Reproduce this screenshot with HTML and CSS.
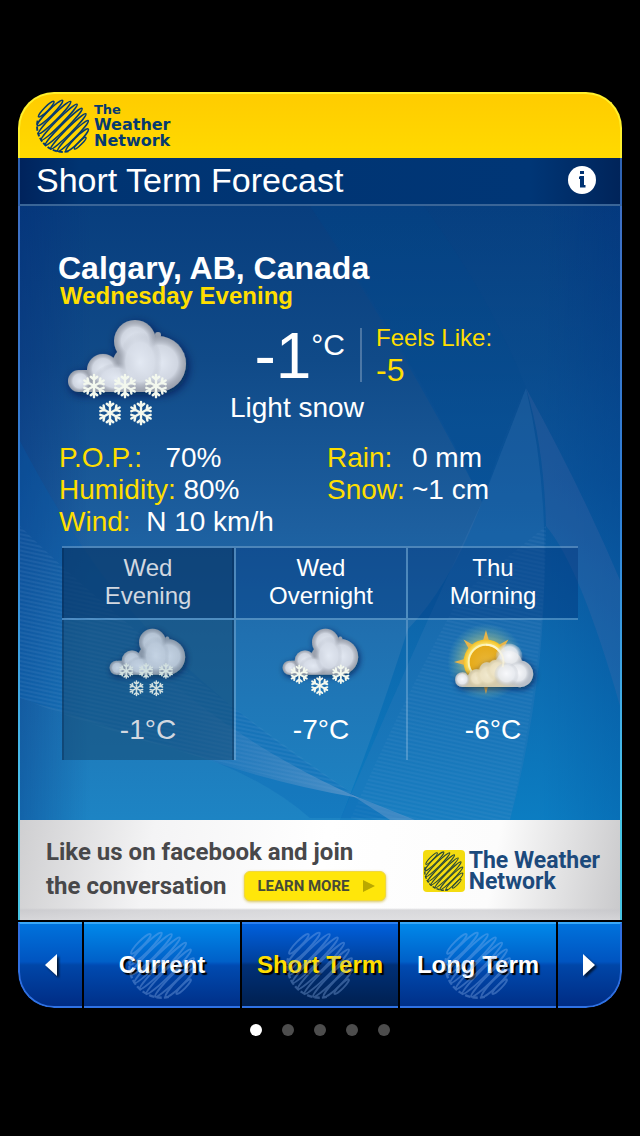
FILE: index.html
```html
<!DOCTYPE html>
<html lang="en">
  <head>
    <meta charset="utf-8">
    <meta name="viewport" content="width=device-width, initial-scale=1">
    <title>Short Term Forecast</title>
    <link rel="stylesheet" href="styles.css">
  </head>
  <body>
    <!-- Shared drawings -->
    <svg class="defs" width="0" height="0" aria-hidden="true">
      <defs>
        <radialGradient id="puff" cx="50%" cy="50%" r="50%">
          <stop offset="0" stop-color="#e3e9f3" />
          <stop offset="0.65" stop-color="#d6dce7" stop-opacity="0.9" />
          <stop offset="1" stop-color="#b0b6c2" stop-opacity="0" />
        </radialGradient>
        <radialGradient id="white-puff" cx="50%" cy="45%" r="55%">
          <stop offset="0" stop-color="#f8f9fc" />
          <stop offset="0.6" stop-color="#e8ebf0" stop-opacity="0.9" />
          <stop offset="1" stop-color="#b4bac4" stop-opacity="0" />
        </radialGradient>
        <radialGradient id="cream-puff" cx="50%" cy="50%" r="50%">
          <stop offset="0" stop-color="#f2ead0" />
          <stop offset="0.6" stop-color="#ece2c4" stop-opacity="0.9" />
          <stop offset="1" stop-color="#d8cba0" stop-opacity="0" />
        </radialGradient>
        <linearGradient id="sun-cloud" x1="0" y1="0" x2="1" y2="0">
          <stop offset="0" stop-color="#b4bac4" />
          <stop offset="0.2" stop-color="#cfc6a8" />
          <stop offset="0.6" stop-color="#d6ccae" />
          <stop offset="0.85" stop-color="#b9bfc9" />
        </linearGradient>
        <radialGradient id="sun-disk" cx="50%" cy="50%" r="50%">
          <stop offset="0" stop-color="#e8b638" />
          <stop offset="0.7" stop-color="#e6ab1a" />
          <stop offset="0.8" stop-color="#fbe266" />
          <stop offset="1" stop-color="#f2bd22" />
        </radialGradient>
        <radialGradient id="sun-glow" cx="50%" cy="50%" r="50%">
          <stop offset="0.4" stop-color="#f5e05a" stop-opacity="0.7" />
          <stop offset="1" stop-color="#8fd0b0" stop-opacity="0" />
        </radialGradient>
        <filter id="cloud-shadow" x="-20%" y="-20%" width="140%" height="150%">
          <feDropShadow dx="2" dy="3" stdDeviation="5" flood-color="#00163c" flood-opacity="0.7" />
        </filter>
        <symbol id="globe" viewBox="0 0 100 100">
          <g transform="rotate(-45 50 50)" fill="none" stroke="currentColor" stroke-width="2.800">
            <ellipse cx="50" cy="6" rx="20" ry="4" />
            <ellipse cx="50" cy="16" rx="33" ry="5" />
            <ellipse cx="50" cy="28" rx="42" ry="5" />
            <ellipse cx="50" cy="40" rx="47" ry="5" />
            <ellipse cx="50" cy="52" rx="48" ry="5" />
            <ellipse cx="50" cy="64" rx="46" ry="5" />
            <ellipse cx="50" cy="76" rx="40" ry="5" />
            <ellipse cx="50" cy="87" rx="29" ry="5" />
            <ellipse cx="50" cy="95" rx="15" ry="3" />
          </g>
          <path d="M3 40A48 48 0 0 0 60 97" fill="none" stroke="currentColor" stroke-width="3.500" stroke-dasharray="8 3" />
        </symbol>
        <symbol id="flake" viewBox="-14 -14 28 28" overflow="visible">
          <g stroke="#f3f8ee" stroke-width="2.600" stroke-linecap="round">
            <g id="flake-arm">
              <path d="M0 -12V12M-3.5 -10L0 -7L3.5 -10M-3.5 10L0 7L3.5 10" fill="none" />
            </g>
            <use href="#flake-arm" transform="rotate(60)" />
            <use href="#flake-arm" transform="rotate(120)" />
          </g>
        </symbol>
        <symbol id="cloud" viewBox="0 0 128 112" overflow="visible">
          <g filter="url(#cloud-shadow)">
            <g fill="#9ca2ae">
              <rect x="8" y="54" width="92" height="22" rx="10" />
              <circle cx="15" cy="65" r="11" />
              <circle cx="39" cy="54" r="16" />
              <circle cx="94" cy="48" r="28" />
              <circle cx="71" cy="25" r="21" />
              <circle cx="70" cy="50" r="22" />
              <circle cx="94" cy="19" r="3" />
            </g>
          </g>
          <circle cx="16" cy="65" r="11" fill="url(#puff)" />
          <circle cx="39" cy="53" r="16" fill="url(#puff)" />
          <circle cx="96" cy="47" r="27" fill="url(#puff)" />
          <circle cx="71" cy="25" r="21" fill="url(#puff)" />
          <ellipse cx="52" cy="62" rx="22" ry="15" fill="url(#puff)" />
          <ellipse cx="76" cy="46" rx="22" ry="30" fill="url(#puff)" />
        </symbol>
        <symbol id="light-snow" viewBox="0 0 128 112" overflow="visible">
          <use href="#cloud" width="128" height="112" />
          <use href="#flake" x="17" y="57" width="26" height="26" />
          <use href="#flake" x="48" y="57" width="26" height="26" />
          <use href="#flake" x="79" y="57" width="26" height="26" />
          <use href="#flake" x="33" y="84" width="26" height="26" />
          <use href="#flake" x="64" y="84" width="26" height="26" />
        </symbol>
        <symbol id="snow" viewBox="0 0 128 112" overflow="visible">
          <use href="#cloud" width="128" height="112" />
          <use href="#flake" x="14" y="59" width="32" height="32" />
          <use href="#flake" x="79" y="59" width="32" height="32" />
          <use href="#flake" x="46" y="77" width="32" height="32" />
        </symbol>
        <symbol id="part-sun" viewBox="0 0 128 112" overflow="visible">
          <circle cx="53" cy="56" r="60" fill="url(#sun-glow)" />
          <g fill="#e9b548">
            <path d="M48 24L53 6L58 24Z" />
            <path d="M48 88L53 106L58 88Z" />
            <path d="M21 51L3 56L21 61Z" />
            <path d="M27 37L18 21L34 30Z" />
            <path d="M79 37L88 21L72 30Z" />
          </g>
          <circle cx="53" cy="56" r="35" fill="url(#sun-disk)" />
          <circle cx="53" cy="56" r="27" fill="none" stroke="#fbf3b4" stroke-width="3" />
          <g filter="url(#cloud-shadow)">
            <path d="M5 84A11 11 0 0 1 25 77A14 14 0 0 1 43 68A12 12 0 0 1 59 57Q63 52 69 53A21 21 0 0 1 109 54A20 20 0 0 1 103 95H16A11 11 0 0 1 5 84Z" fill="url(#sun-cloud)" />
          </g>
          <circle cx="16" cy="84" r="11" fill="url(#white-puff)" />
          <circle cx="89" cy="48" r="21" fill="url(#white-puff)" />
          <circle cx="103" cy="75" r="19" fill="url(#white-puff)" />
          <circle cx="39" cy="81" r="14" fill="url(#cream-puff)" />
          <circle cx="56" cy="76" r="19" fill="url(#cream-puff)" />
          <circle cx="71" cy="68" r="18" fill="url(#cream-puff)" />
          <circle cx="85" cy="76" r="19" fill="url(#white-puff)" />
          <path d="M53 29A27 27 0 0 1 79 64" fill="none" stroke="#fff8dc" stroke-width="3" opacity="0.6" />
        </symbol>
      </defs>
    </svg>

    <main class="card">
      <header class="brand">
        <svg class="brand-globe"><use href="#globe" /></svg>
        <div class="brand-name"><small>The</small>Weather<br>Network</div>
      </header>

      <div class="titlebar">
        <h1>Short Term Forecast</h1>
        <button class="info" aria-label="Information">
          <svg viewBox="0 0 28 28">
            <circle cx="14" cy="14" r="14" fill="#fff" />
            <path d="M12 5h4v3h-4zM12 10h4v9h1.500v2.500H12V13h-1v-2z" fill="#003272" />
          </svg>
        </button>
      </div>

      <section class="forecast">
        <svg class="waves" viewBox="0 0 600 614" preserveAspectRatio="none" aria-hidden="true">
          <defs>
            <pattern id="mesh" width="4" height="4" patternUnits="userSpaceOnUse" patternTransform="rotate(12)">
              <path d="M0 1H4" stroke="#8fb4e0" stroke-width="1" />
            </pattern>
            <linearGradient id="band" gradientUnits="userSpaceOnUse" x1="0" y1="0" x2="0" y2="614">
              <stop offset="0" stop-color="#004488" stop-opacity="0.2" />
              <stop offset="0.45" stop-color="#00509a" stop-opacity="0.6" />
              <stop offset="1" stop-color="#0078c0" stop-opacity="0.6" />
            </linearGradient>
            <linearGradient id="streak" x1="0" y1="0" x2="1" y2="0">
              <stop offset="0" stop-color="#3a78c0" stop-opacity="0" />
              <stop offset="0.6" stop-color="#6a98c8" stop-opacity="0.5" />
              <stop offset="1" stop-color="#7fa6d0" stop-opacity="0.9" />
            </linearGradient>
          </defs>
          <path d="M290 0Q400 170 462 296Q430 380 388 423Q350 540 320 614H600V0Z" fill="url(#band)" />
          <path d="M404 0Q470 90 506 182Q490 210 462 296Q400 160 290 0Z" fill="#004c90" opacity="0.15" />
          <path d="M506 182Q560 280 600 374V500Q560 360 526 320Q524 240 506 182Z" fill="#6070a8" opacity="0.2" />
          <path d="M506 182Q534 300 520 450Q510 540 490 614H320Q390 450 462 296Z" fill="#4a84c0" opacity="0.2" />
          <path d="M526 320Q526 450 490 614H330Q380 500 440 390Z" fill="url(#mesh)" opacity="0.15" />
          <path d="M0 235Q60 350 123 418Q210 510 339 592L388 612H290Q230 560 130 535Q60 510 0 492Z" fill="#0060b4" opacity="0.25" />
          <path d="M0 320Q120 440 339 592Q120 540 0 492Z" fill="url(#mesh)" opacity="0.2" />
          <path d="M120 450Q220 540 339 592Q240 575 150 540Z" fill="url(#streak)" opacity="0.6" />
          <path d="M330 588L395 614H370Z" fill="#7fa6d0" opacity="0.4" />
        </svg>

        <h2 class="city">Calgary, AB, Canada</h2>
        <p class="period">Wednesday Evening</p>

        <div class="current">
          <svg class="current-icon" role="img" aria-label="Light snow"><use href="#light-snow" /></svg>
          <div class="temp">-1<sup>°C</sup></div>
          <div class="feels">Feels Like:<strong>-5</strong></div>
          <div class="condition">Light snow</div>
        </div>

        <div class="details">
          <dl>
            <div><dt>P.O.P.:&nbsp;&nbsp;&nbsp;</dt><dd>70%</dd></div>
            <div><dt>Humidity:&nbsp;</dt><dd>80%</dd></div>
            <div><dt>Wind:&nbsp;&nbsp;</dt><dd>N 10 km/h</dd></div>
          </dl>
          <dl class="precip">
            <div><dt>Rain:</dt><dd>0 mm</dd></div>
            <div><dt>Snow:</dt><dd>~1 cm</dd></div>
          </dl>
        </div>

        <table class="periods">
          <thead>
            <tr>
              <th class="active">Wed<br>Evening</th>
              <th>Wed<br>Overnight</th>
              <th>Thu<br>Morning</th>
            </tr>
          </thead>
          <tbody>
            <tr>
              <td class="active"><svg class="icon"><use href="#light-snow" /></svg><span>-1°C</span></td>
              <td><svg class="icon"><use href="#snow" /></svg><span>-7°C</span></td>
              <td><svg class="icon"><use href="#part-sun" /></svg><span>-6°C</span></td>
            </tr>
          </tbody>
        </table>
      </section>

      <aside class="ad">
        <div class="ad-text">
          Like us on facebook and join
          <div class="ad-row">
            the conversation
            <a class="learn" href="#">LEARN MORE
              <svg viewBox="0 0 12 14"><path d="M0 1L12 7L0 13Z" fill="#b9a800" /></svg>
            </a>
          </div>
        </div>
        <div class="ad-logo">
          <svg class="ad-globe"><use href="#globe" /></svg>
          <div>The Weather<br>Network</div>
        </div>
      </aside>

      <nav class="tabs">
        <button class="arrow" aria-label="Previous">
          <svg viewBox="0 0 12 22"><path d="M12 0V22L0 11Z" fill="#fff" /></svg>
        </button>
        <button class="tab"><svg class="tab-globe"><use href="#globe" /></svg><span>Current</span></button>
        <button class="tab selected"><svg class="tab-globe"><use href="#globe" /></svg><span>Short Term</span></button>
        <button class="tab"><svg class="tab-globe"><use href="#globe" /></svg><span>Long Term</span></button>
        <button class="arrow" aria-label="Next">
          <svg viewBox="0 0 12 22"><path d="M0 0V22L12 11Z" fill="#fff" /></svg>
        </button>
      </nav>
    </main>

    <div class="dots">
      <button class="dot on" aria-label="Page 1"></button>
      <button class="dot" aria-label="Page 2"></button>
      <button class="dot" aria-label="Page 3"></button>
      <button class="dot" aria-label="Page 4"></button>
      <button class="dot" aria-label="Page 5"></button>
    </div>
  </body>
</html>
```
FILE: styles.css
```css
* {
  box-sizing: border-box;
}

body {
  margin: 0;
  padding: 92px 18px 0;
  background-color: #000000;
  color: #ffffff;
  font-family: "Liberation Sans", Arial, sans-serif;
}

h1,
h2,
p,
dl,
dd {
  margin: 0;
}

button {
  margin: 0;
  padding: 0;
  border: none;
  background: none;
  color: inherit;
  font-family: inherit;
  cursor: pointer;
}

svg {
  display: block;
}

.defs {
  position: absolute;
}

/* Header */
.brand {
  display: flex;
  align-items: center;
  gap: 4px;
  height: 66px;
  padding: 0 16px;
  border: 2px solid #fff02c;
  border-bottom: none;
  border-radius: 36px 36px 0 0;
  background: linear-gradient(#ffcc00, #ffda00);
  color: #053a70;
}

.brand-globe {
  width: 54px;
  height: 54px;
}

.brand-name {
  font: bold 16px/16px "DejaVu Sans", sans-serif;
}

.brand-name small {
  display: block;
  font-size: 13px;
  line-height: 14px;
}

.titlebar {
  display: flex;
  align-items: center;
  justify-content: space-between;
  height: 48px;
  padding: 0 24px 2px 16px;
  border: solid #2f63b4;
  border-width: 0 2px;
  border-bottom: 2px solid #3a6597;
  background: linear-gradient(90deg, #00235c, #003472 60px, #003676 calc(100% - 90px), #00245a);
}

h1 {
  font-size: 34px;
  font-weight: normal;
  line-height: 44px;
}

.info svg {
  width: 28px;
  height: 28px;
}

/* Forecast */
.forecast {
  position: relative;
  padding: 46px 38px 60px;
  border: solid;
  border-width: 0 2px;
  border-image: linear-gradient(#3e6fc4, #2f80d8 50%, #4cc8ee) 2;
  background:
    linear-gradient(90deg, rgba(0, 40, 120, 0.35), rgba(0, 40, 120, 0) 70px, rgba(0, 40, 120, 0) calc(100% - 80px), rgba(0, 40, 120, 0.35)),
    linear-gradient(#083e7e, #104a88 25%, #1d5f9f 52%, #2070b0 70%, #1d84c4);
}

.forecast > * {
  position: relative;
}

.forecast > .waves {
  position: absolute;
  left: 0;
  top: 0;
  width: 100%;
  height: 100%;
}

.city {
  font-size: 32px;
  line-height: 32px;
}

.period {
  padding-left: 2px;
  color: #ffde00;
  font-size: 24px;
  font-weight: bold;
  line-height: 24px;
}

.current {
  display: grid;
  grid-template-columns: 128px 168px 1fr;
  grid-template-rows: 54px 52px;
  margin-top: 20px;
  padding-left: 6px;
}

.current-icon {
  grid-row: 1 / 3;
  width: 128px;
  height: 112px;
  margin-top: -12px;
  overflow: visible;
}

.temp {
  padding-right: 15px;
  font-size: 64px;
  line-height: 56px;
  text-align: right;
}

.temp sup {
  font-size: 30px;
  line-height: 34px;
  vertical-align: top;
}

.feels {
  padding-left: 14px;
  border-left: 2px solid rgba(255, 255, 255, 0.25);
  color: #ffde00;
  font-size: 24px;
  line-height: 20px;
}

.feels strong {
  display: block;
  font-size: 32px;
  font-weight: normal;
  line-height: 44px;
}

.condition {
  grid-column: 2 / 4;
  padding-left: 38px;
  font-size: 28px;
  line-height: 52px;
}

.details {
  display: grid;
  grid-template-columns: 268px 1fr;
  margin-top: 8px;
  font-size: 28px;
  line-height: 32px;
}

.details dl > div {
  display: flex;
  padding-left: 1px;
}

.details dt {
  color: #ffde00;
}

.precip dt {
  width: 85px;
}

.periods {
  width: calc(100% - 8px);
  margin: 8px 4px 0;
  border-spacing: 0;
  table-layout: fixed;
  text-align: center;
}

.periods th,
.periods td {
  padding: 0;
  background-clip: padding-box;
}

.periods th + th,
.periods td + td {
  border-left: 2px solid rgba(190, 215, 240, 0.3);
}

.periods th {
  height: 74px;
  padding-bottom: 2px;
  border-top: 2px solid rgba(190, 215, 240, 0.3);
  border-bottom: 2px solid rgba(190, 215, 240, 0.3);
  background-color: rgba(0, 50, 120, 0.4);
  font-size: 24px;
  font-weight: normal;
  line-height: 28px;
}

.periods td {
  height: 140px;
  padding-top: 6px;
  vertical-align: top;
  font-size: 28px;
  line-height: 28px;
}

.periods .icon {
  width: 82px;
  height: 72px;
  margin: 0 auto 18px;
  overflow: visible;
}

.periods .active {
  color: #d2d8e0;
  box-shadow: inset 2px 0 0 rgba(0, 30, 70, 0.3), inset -2px 0 0 rgba(0, 30, 70, 0.3);
}

.periods th.active {
  background-color: rgba(8, 56, 106, 0.7);
}

.periods td.active {
  background-color: rgba(20, 70, 108, 0.5);
}

.periods .active .icon {
  opacity: 0.85;
}

/* Ad banner */
.ad {
  display: flex;
  align-items: center;
  justify-content: space-between;
  height: 100px;
  padding: 0 20px 2px 26px;
  border: solid #48c4e4;
  border-width: 0 2px;
  background:
    linear-gradient(rgba(200, 200, 204, 0) 88%, rgba(200, 200, 204, 0.7) 90%, rgba(215, 215, 218, 0.8)),
    linear-gradient(100deg, #cfcfd1, #f4f4f5 22%, #ffffff 50%, #fcfcfc 78%, #c9c9cb);
  color: #48484a;
}

.ad-text {
  font: bold 24px/34px Roboto, sans-serif;
}

.ad-row {
  display: flex;
  align-items: center;
  gap: 18px;
}

.learn {
  display: flex;
  align-items: center;
  justify-content: space-between;
  width: 142px;
  height: 30px;
  margin-right: -40px;
  padding: 0 10px 0 12px;
  border: 1px solid #f0d840;
  border-radius: 6px;
  background-color: #ffe60a;
  box-shadow: 0 1px 3px rgba(190, 160, 0, 0.6);
  color: #454a38;
  font-size: 15px;
  line-height: 28px;
  text-decoration: none;
}

.learn svg {
  width: 12px;
  height: 14px;
}

.ad-logo {
  display: flex;
  align-items: center;
  gap: 4px;
  padding-top: 4px;
  color: #1c4a7c;
  font: bold 23px/21px Roboto, sans-serif;
}

.ad-globe {
  width: 42px;
  height: 42px;
  padding: 1px;
  border-radius: 4px;
  background-color: #f4dc10;
  color: #2c4a38;
}

/* Bottom tabs */
.tabs {
  display: grid;
  grid-template-columns: 64px 1fr 1fr 1fr 64px;
  gap: 2px;
  height: 88px;
  padding-top: 2px;
  overflow: hidden;
  border-radius: 0 0 36px 36px;
  background-color: #000000;
}

.tab,
.arrow {
  display: grid;
  place-items: center;
  border-top: 2px solid #38a8f8;
  border-bottom: 2px solid #2f72e4;
  background: linear-gradient(#0088ea, #0060c8 46%, #0050ba 49%, #004ab0 51%, #003088);
}

.tab > * {
  grid-area: 1 / 1;
}

.tab span {
  font-size: 24px;
  font-weight: bold;
  text-shadow: 2px 2px 1px #000000;
}

.tab-globe {
  width: 68px;
  height: 68px;
  color: #8fb8f0;
  opacity: 0.35;
}

.tab.selected {
  border-top-color: #2c80f0;
  background: linear-gradient(#0060dc, #00409c 46%, #003078 50%, #002050);
  color: #ffde00;
}

.arrow {
  background: linear-gradient(#0072dc, #0054c0 46%, #0046a8 50%, #002c84);
}

.arrow:first-child {
  border-left: 2px solid #2f6fe0;
  border-bottom-left-radius: 36px;
}

.arrow:last-child {
  border-right: 2px solid #2f6fe0;
  border-bottom-right-radius: 36px;
}

.arrow svg {
  width: 12px;
  height: 22px;
  filter: drop-shadow(2px 2px 1px rgba(0, 0, 0, 0.7));
}

/* Page dots */
.dots {
  display: flex;
  justify-content: center;
  gap: 20px;
  padding-top: 16px;
}

.dot {
  width: 12px;
  height: 12px;
  border-radius: 50%;
  background-color: #4d4d4d;
}

.dot.on {
  background-color: #ffffff;
}
```
